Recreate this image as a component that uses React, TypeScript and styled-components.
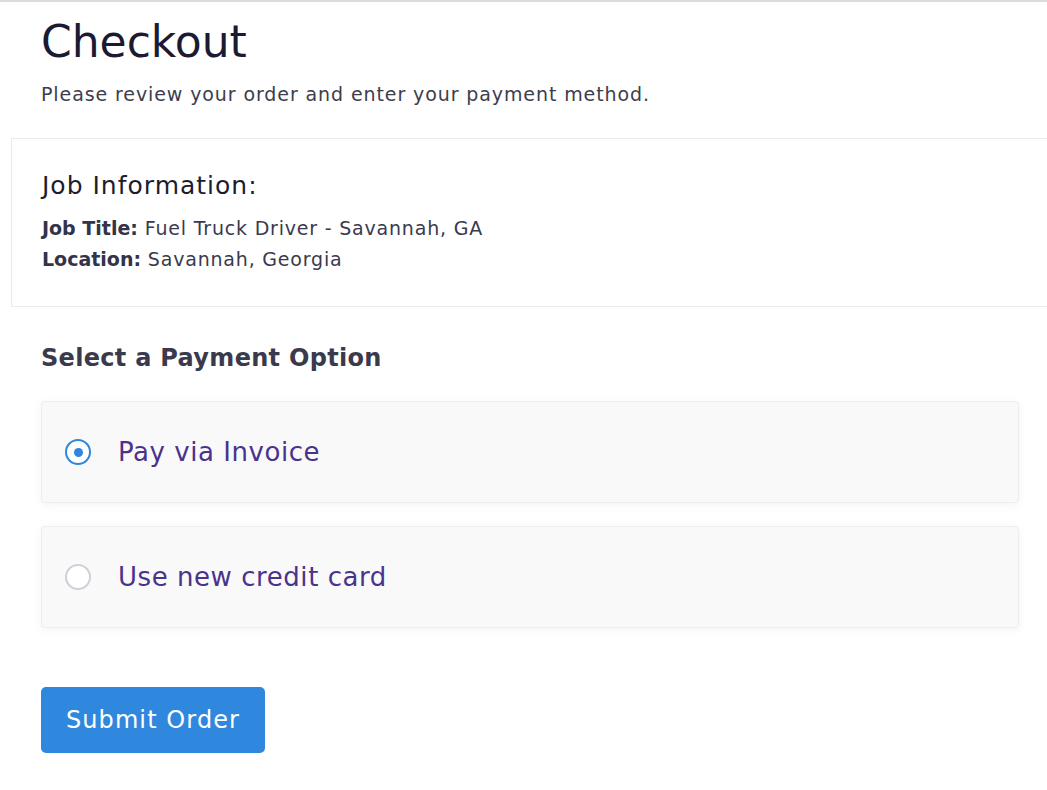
import React, { useState } from "react";
import styled, { createGlobalStyle } from "styled-components";

const GlobalStyle = createGlobalStyle`
  html, body {
    margin: 0;
    padding: 0;
    background: #ffffff;
    font-family: "DejaVu Sans", "Open Sans", sans-serif;
    overflow: hidden;
  }
  * { box-sizing: border-box; }
`;

const Page = styled.div`
  border-top: 2px solid #dcdcdc;
  width: 1047px;
  min-height: 790px;
  overflow: hidden;
`;

const Container = styled.div`
  width: 978px;
  margin-left: 41px;
  padding-top: 10px;
`;

const Title = styled.h1`
  margin: 0;
  font-size: 44px;
  font-weight: 500;
  line-height: 60px;
  color: #1b1a33;
`;

const Subtitle = styled.p`
  margin: 8px 0 0;
  font-size: 19px;
  letter-spacing: 0.9px;
  line-height: 28px;
  color: #3d3d4e;
`;

const JobBox = styled.section`
  margin: 30px -30px 0;
  border: 1px solid #e9e9f0;
  padding: 30px 30px 31px;
`;

const JobHeading = styled.h3`
  margin: 0 0 10px;
  font-size: 25px;
  font-weight: 500;
  letter-spacing: 1px;
  line-height: 34px;
  color: #1d1c2f;
`;

const InfoLine = styled.div`
  font-size: 19px;
  letter-spacing: 0.8px;
  line-height: 31px;
  color: #3a3a4c;

  b {
    font-weight: 700;
    letter-spacing: 0;
    color: #33334a;
  }
`;

const SectionTitle = styled.h2`
  margin: 34px 0 0;
  font-size: 24px;
  font-weight: 700;
  letter-spacing: 0.3px;
  line-height: 34px;
  color: #3a3a4c;
`;

const Options = styled.div`
  display: flex;
  flex-direction: column;
  gap: 23px;
  margin-top: 26px;
`;

const OptionCard = styled.label`
  display: flex;
  align-items: center;
  gap: 27px;
  height: 102px;
  padding: 0 23px;
  background: #f9f9f9;
  border: 1px solid #eeeeee;
  border-radius: 4px;
  box-shadow: 0 2px 10px rgba(0, 0, 0, 0.05);
  cursor: pointer;
`;

const Radio = styled.span<{ checked: boolean }>`
  width: 26px;
  height: 26px;
  border-radius: 50%;
  border: 2.5px solid ${p => (p.checked ? "#2f86dd" : "#ccd1d8")};
  background: #ffffff;
  display: flex;
  align-items: center;
  justify-content: center;
  flex: 0 0 auto;

  &::after {
    content: "";
    width: 9px;
    height: 9px;
    border-radius: 50%;
    background: #2f86dd;
    display: ${p => (p.checked ? "block" : "none")};
  }
`;

const OptionText = styled.span`
  font-size: 26px;
  font-weight: 500;
  letter-spacing: 0.55px;
  color: #4a338c;
`;

const SubmitButton = styled.button`
  margin-top: 59px;
  width: 224px;
  height: 66px;
  border: none;
  border-radius: 5px;
  background: #2f88de;
  color: #ffffff;
  font-family: inherit;
  font-size: 24px;
  font-weight: 400;
  letter-spacing: 1.1px;
  cursor: pointer;
`;

const options = [
  { id: "invoice", label: "Pay via Invoice" },
  { id: "card", label: "Use new credit card" },
];

const App = () => {
  const [selected, setSelected] = useState("invoice");

  return (
    <Page>
      <GlobalStyle />
      <Container>
        <Title>Checkout</Title>
        <Subtitle>Please review your order and enter your payment method.</Subtitle>

        <JobBox>
          <JobHeading>Job Information:</JobHeading>
          <InfoLine>
            <b>Job Title:</b> Fuel Truck Driver - Savannah, GA
          </InfoLine>
          <InfoLine>
            <b>Location:</b> Savannah, Georgia
          </InfoLine>
        </JobBox>

        <SectionTitle>Select a Payment Option</SectionTitle>
        <Options>
          {options.map(opt => (
            <OptionCard key={opt.id} onClick={() => setSelected(opt.id)}>
              <Radio checked={selected === opt.id} />
              <OptionText>{opt.label}</OptionText>
            </OptionCard>
          ))}
        </Options>

        <SubmitButton>Submit Order</SubmitButton>
      </Container>
    </Page>
  );
};

export default App;
